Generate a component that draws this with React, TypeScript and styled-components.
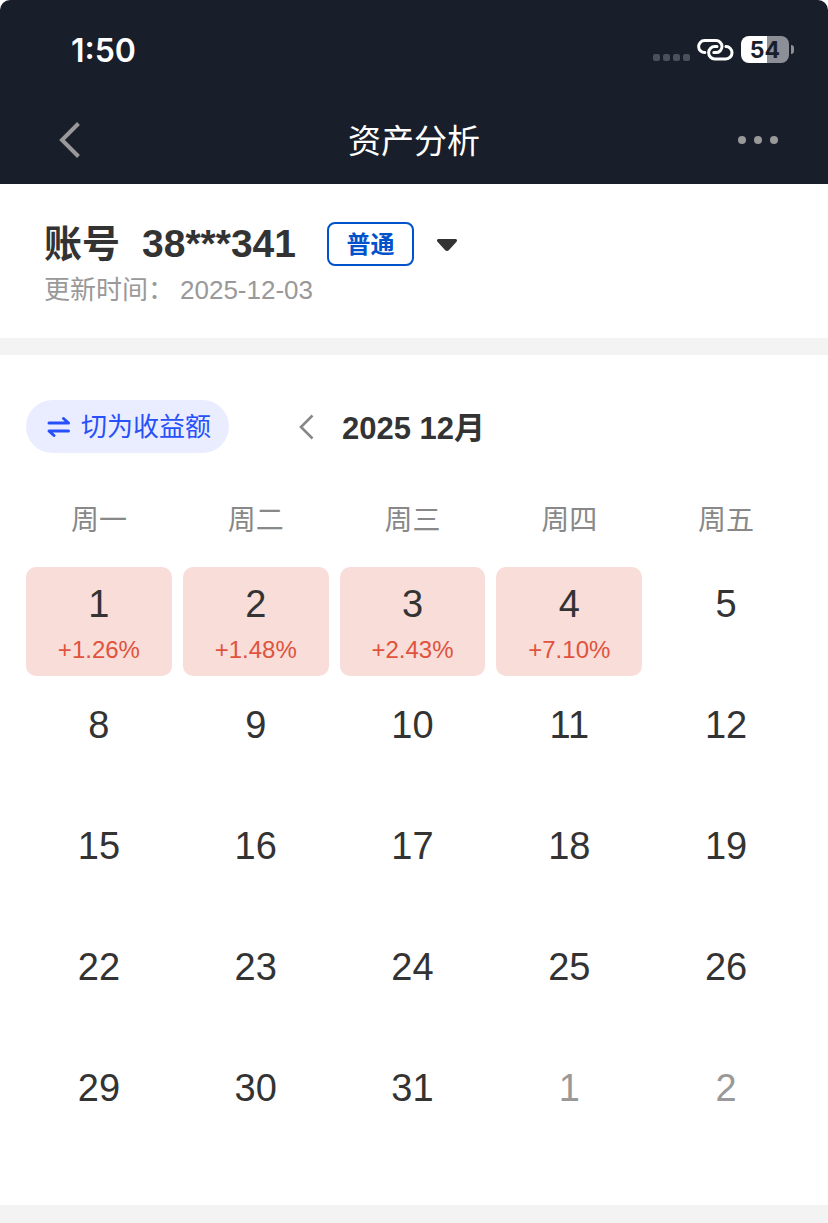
import React from 'react';
import styled, { createGlobalStyle } from 'styled-components';

const GlobalStyle = createGlobalStyle`
  * { box-sizing: border-box; }
  html, body, #root { height: 100%; }
  body {
    margin: 0;
    background: #fff;
    color: #333;
    font-family: "Liberation Sans", "Noto Sans CJK SC", sans-serif;
  }
  button {
    margin: 0;
    padding: 0;
    border: 0;
    background: none;
    color: inherit;
    font: inherit;
    cursor: pointer;
  }
`;

const Page = styled.div`
  min-height: 100%;
  display: flex;
  flex-direction: column;
`;

const TopArea = styled.header`
  background: #181e2a;
  color: #fff;
  border-radius: 10px 10px 0 0;
`;

const StatusBar = styled.div`
  display: flex;
  align-items: center;
  justify-content: space-between;
  height: 96px;
  padding: 3px 34px 0 71px;
`;

const Clock = styled.time`
  padding-top: 3px;
  font: 600 32px/40px Inter, sans-serif;
`;

const StatusIcons = styled.div`
  display: flex;
  align-items: center;
  gap: 7px;
`;

const Signal = styled.div`
  display: flex;
  gap: 3px;
  padding-top: 16px;
`;

const SignalDot = styled.span`
  width: 7px;
  height: 7px;
  border-radius: 2px;
  background: #4b505a;
`;

const BatteryWrap = styled.div`
  display: flex;
  align-items: center;
  gap: 2px;
`;

const Battery = styled.div<{ $level: number }>`
  width: 48px;
  height: 27px;
  border-radius: 8px;
  background: linear-gradient(to right, #fff ${p => p.$level}%, #8c8f95 ${p => p.$level}%);
  color: #181e2a;
  text-align: center;
  font: 700 23px/28px Inter, sans-serif;
`;

const BatteryTip = styled.span`
  width: 3px;
  height: 9px;
  border-radius: 0 4px 4px 0;
  background: #8c8f95;
`;

const NavBar = styled.nav`
  display: grid;
  grid-template-columns: 60px 1fr 60px;
  align-items: center;
  height: 88px;
  padding: 0 40px;
`;

const Title = styled.h1`
  margin: 0;
  padding-top: 4px;
  text-align: center;
  font-size: 33px;
  font-weight: 400;
  line-height: 44px;
`;

const IconButton = styled.button`
  display: flex;
  align-items: center;
  justify-content: center;
  height: 44px;
`;

const Account = styled.section`
  padding: 38px 44px 32px;
`;

const AccountRow = styled.div`
  display: flex;
  align-items: center;
  height: 44px;
`;

const AccountName = styled.h2`
  display: flex;
  gap: 22px;
  margin: 0 31px 0 0;
  font-size: 39px;
  line-height: 44px;
  font-weight: 700;
`;

const AccountLabel = styled.span`
  font-size: 38px;
`;

const Tag = styled.span`
  width: 87px;
  height: 44px;
  border: 2px solid #0052cc;
  border-radius: 8px;
  color: #0052cc;
  text-align: center;
  font-size: 24px;
  line-height: 42px;
  font-weight: 700;
`;

const CaretButton = styled(IconButton)`
  margin-left: 12px;
  width: 42px;
`;

const Updated = styled.p`
  display: flex;
  gap: 6px;
  margin: 8px 0 0;
  color: #999;
  font-size: 26px;
  line-height: 32px;
`;

const Divider = styled.div`
  height: 17px;
  background: #f3f3f3;
`;

const Calendar = styled.main`
  padding: 45px 18px 33px 15px;
`;

const Toolbar = styled.div`
  display: flex;
  align-items: center;
  padding: 0 11px;
`;

const SwitchButton = styled.button`
  display: flex;
  align-items: center;
  gap: 10px;
  height: 53px;
  padding: 0 18px 0 19px;
  border-radius: 27px;
  background: #e9edff;
  color: #2850fa;
  font-size: 26px;
  line-height: 52px;
`;

const MonthPicker = styled.div`
  display: flex;
  align-items: center;
  margin-left: 56px;
  gap: 14px;
`;

const MonthButton = styled(IconButton)`
  width: 43px;
`;

const Month = styled.h3`
  margin: 4px 0 0;
  font-size: 31px;
  line-height: 44px;
  font-weight: 700;
`;

const Grid = styled.table`
  width: 100%;
  margin-top: 34px;
  table-layout: fixed;
  border-collapse: separate;
  border-spacing: 11px 12px;
`;

const Weekday = styled.th`
  height: 56px;
  padding: 0 0 12px;
  color: #888;
  font-size: 28px;
  line-height: 40px;
  font-weight: 400;
`;

const Day = styled.td<{ $gain?: boolean; $muted?: boolean }>`
  height: 109px;
  padding: 15px 0 0;
  border-radius: 10px;
  vertical-align: top;
  text-align: center;
  background: ${p => (p.$gain ? '#f8ddd9' : 'transparent')};
  color: ${p => (p.$muted ? '#999' : '#333')};
  font-size: 38px;
  line-height: 44px;
`;

const Rate = styled.div`
  margin-top: 10px;
  color: #e0533d;
  font-size: 24px;
  line-height: 28px;
`;

const Footer = styled.div`
  flex: 1;
  min-height: 18px;
  background: #f3f3f3;
`;

type DayData = { day: number; rate?: string; muted?: boolean };

const weekdays = ['周一', '周二', '周三', '周四', '周五'];

const plain = (...days: number[]): DayData[] => days.map(day => ({ day }));

const weeks: DayData[][] = [
  [
    { day: 1, rate: '+1.26%' },
    { day: 2, rate: '+1.48%' },
    { day: 3, rate: '+2.43%' },
    { day: 4, rate: '+7.10%' },
    { day: 5 },
  ],
  plain(8, 9, 10, 11, 12),
  plain(15, 16, 17, 18, 19),
  plain(22, 23, 24, 25, 26),
  [...plain(29, 30, 31), { day: 1, muted: true }, { day: 2, muted: true }],
];

const LinkIcon = () => (
  <svg width="37" height="22" viewBox="0 0 37 22" fill="none" stroke="#fff" strokeWidth="3" strokeLinecap="round">
    <path d="M7.8 13.6A6 6 0 0 1 7.5 1.6H19A6 6 0 0 1 19 13.6H16.8" />
    <path d="M29 7.6A6 6 0 0 1 28.8 19.9H17.8A6 6 0 0 1 17.8 7.6H20" />
  </svg>
);

const BackIcon = () => (
  <svg width="22" height="36" viewBox="0 0 22 36" fill="none" stroke="#999" strokeWidth="4">
    <path d="M19.5 1.5L3 18L19.5 34.5" />
  </svg>
);

const MoreIcon = () => (
  <svg width="40" height="8" viewBox="0 0 40 8" fill="#999">
    <circle cx="4" cy="4" r="4" />
    <circle cx="20" cy="4" r="4" />
    <circle cx="36" cy="4" r="4" />
  </svg>
);

const CaretIcon = () => (
  <svg width="22" height="16" viewBox="0 0 22 16" fill="#333">
    <path d="M2.6 3H19.4C21 3 21.6 4.6 20.5 5.8L13 14C11.8 15.3 10.2 15.3 9 14L1.5 5.8C.4 4.6 1 3 2.6 3Z" />
  </svg>
);

const SwapIcon = () => (
  <svg width="26" height="22" viewBox="0 0 26 22" fill="none" stroke="currentColor" strokeWidth="3" strokeLinecap="round" strokeLinejoin="round">
    <path d="M4 7H23.5L18.5 2.5" />
    <path d="M23.5 15H4L9 19.5" />
  </svg>
);

const PrevIcon = () => (
  <svg width="15" height="26" viewBox="0 0 15 26" fill="none" stroke="#888" strokeWidth="2.6">
    <path d="M13.5 1.5L2 13L13.5 24.5" />
  </svg>
);

export default function App() {
  return (
    <Page>
      <GlobalStyle />
      <TopArea>
        <StatusBar>
          <Clock>1:50</Clock>
          <StatusIcons>
            <Signal>
              <SignalDot />
              <SignalDot />
              <SignalDot />
              <SignalDot />
            </Signal>
            <LinkIcon />
            <BatteryWrap>
              <Battery $level={54}>54</Battery>
              <BatteryTip />
            </BatteryWrap>
          </StatusIcons>
        </StatusBar>
        <NavBar>
          <IconButton aria-label="返回"><BackIcon /></IconButton>
          <Title>资产分析</Title>
          <IconButton aria-label="更多"><MoreIcon /></IconButton>
        </NavBar>
      </TopArea>

      <Account>
        <AccountRow>
          <AccountName>
            <AccountLabel>账号</AccountLabel>
            <span>38***341</span>
          </AccountName>
          <Tag>普通</Tag>
          <CaretButton aria-label="选择账号"><CaretIcon /></CaretButton>
        </AccountRow>
        <Updated>
          <span>更新时间：</span>
          <time>2025-12-03</time>
        </Updated>
      </Account>
      <Divider />

      <Calendar>
        <Toolbar>
          <SwitchButton>
            <SwapIcon />
            切为收益额
          </SwitchButton>
          <MonthPicker>
            <MonthButton aria-label="上个月"><PrevIcon /></MonthButton>
            <Month>2025 12月</Month>
          </MonthPicker>
        </Toolbar>
        <Grid>
          <thead>
            <tr>
              {weekdays.map(name => <Weekday key={name} scope="col">{name}</Weekday>)}
            </tr>
          </thead>
          <tbody>
            {weeks.map((week, i) => (
              <tr key={i}>
                {week.map(({ day, rate, muted }) => (
                  <Day key={day} $gain={!!rate} $muted={muted}>
                    {day}
                    {rate && <Rate>{rate}</Rate>}
                  </Day>
                ))}
              </tr>
            ))}
          </tbody>
        </Grid>
      </Calendar>
      <Footer />
    </Page>
  );
}
